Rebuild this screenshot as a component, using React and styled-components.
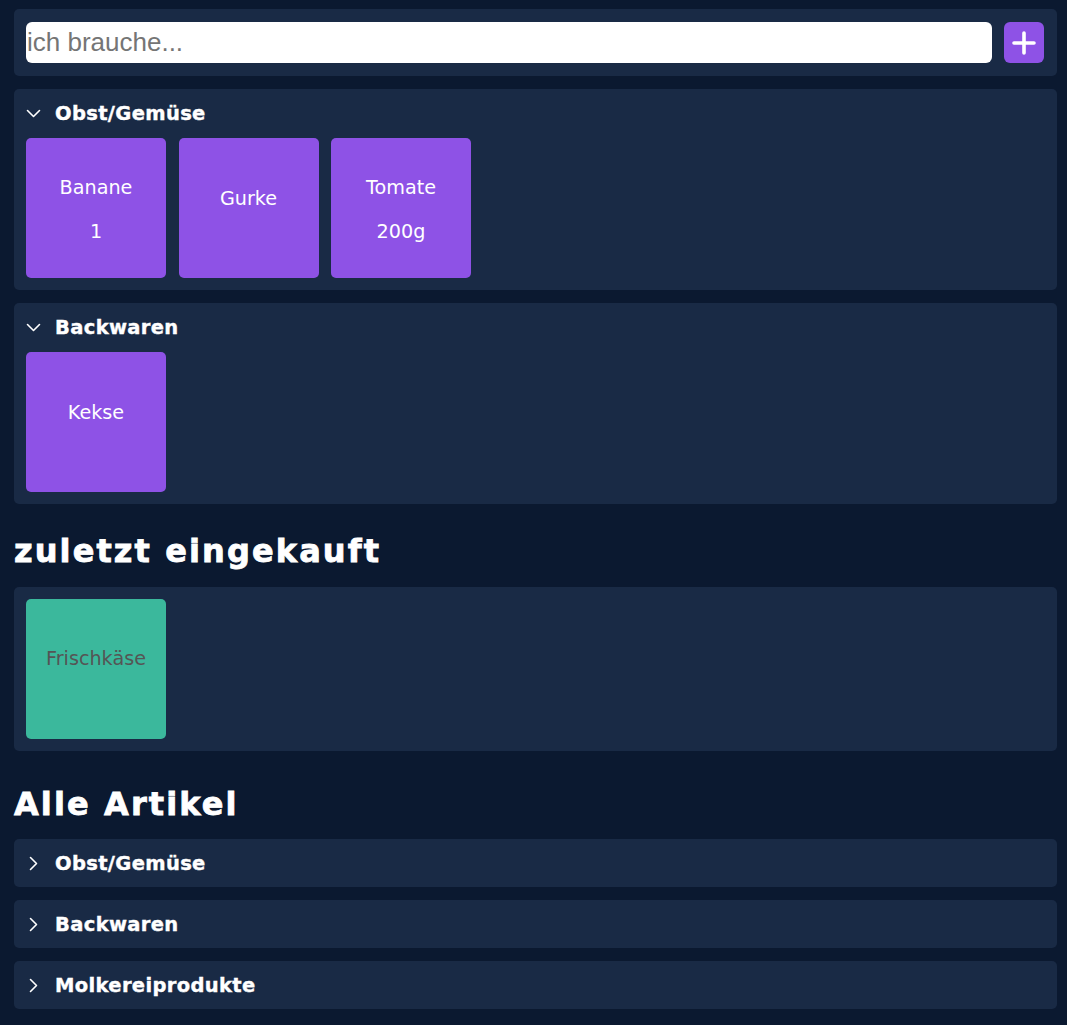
import styled, { createGlobalStyle } from 'styled-components';

const GlobalStyle = createGlobalStyle`
  html, body {
    margin: 0;
    background-color: #0b1930;
  }
  body {
    font-family: "DejaVu Sans", Verdana, sans-serif;
    color: #ffffff;
  }
`;

const Page = styled.div`
  display: flex;
  flex-direction: column;
  gap: 13px;
  padding: 9px 10px 14px 14px;
`;

const Panel = styled.section`
  background-color: #192a45;
  border-radius: 5px;
  padding: 12px 13px 12px 12px;
  display: flex;
  flex-direction: column;
  gap: 13px;
`;

const SearchBar = styled.form`
  display: flex;
  gap: 12px;
  margin: 1px 0;
`;

const Input = styled.input`
  flex: 1;
  height: 41px;
  border: none;
  border-radius: 6px;
  padding: 0 1px;
  font-family: "Liberation Sans", Arial, sans-serif;
  font-size: 26px;
  color: #222;
  background: #ffffff;
  outline: none;

  &::placeholder {
    color: #757575;
  }
`;

const AddButton = styled.button`
  width: 40px;
  height: 41px;
  border: none;
  border-radius: 6px;
  background-color: #8e52e6;
  display: flex;
  align-items: center;
  justify-content: center;
  padding: 0;
  cursor: pointer;
`;

const Header = styled.button`
  display: flex;
  align-items: center;
  height: 24px;
  padding: 0;
  background: none;
  border: none;
  color: #ffffff;
  font-family: "DejaVu Sans", Verdana, sans-serif;
  font-weight: bold;
  font-size: 19.5px;
  letter-spacing: 0.35px;
  -webkit-text-stroke: 0.4px #ffffff;
  text-align: left;
  cursor: pointer;
`;

const Chevron = styled.svg`
  width: 15px;
  height: 15px;
  margin-right: 14px;
  flex-shrink: 0;
  transform: rotate(${(p) => (p.$open ? '0deg' : '-90deg')});
`;

const Tiles = styled.div`
  display: flex;
  flex-wrap: wrap;
  gap: 13px 12.5px;
`;

const Tile = styled.div`
  width: 140px;
  height: 140px;
  box-sizing: border-box;
  padding-top: 3px;
  border-radius: 5px;
  background-color: ${(p) => (p.$done ? '#3bb89c' : '#8e52e6')};
  color: ${(p) => (p.$done ? '#555555' : '#ffffff')};
  display: flex;
  flex-direction: column;
  align-items: center;
  justify-content: center;
  gap: 22px;
  font-size: 19.2px;
  line-height: 22px;
`;

const Line = styled.span`
  display: block;
`;

const Title = styled.h1`
  margin: ${(p) => p.$top}px 0 3.5px;
  font-size: 32px;
  font-weight: bold;
  letter-spacing: 2.1px;
  -webkit-text-stroke: 0.8px #ffffff;
  line-height: normal;
`;

function Category({ name, open, items }) {
  return (
    <Panel>
      <Header type="button">
        <Chevron $open={open} viewBox="0 0 15 15" fill="none" stroke="#fff" strokeWidth="1.6" strokeLinecap="round" strokeLinejoin="round">
          <path d="M1.5 4.5 L7.5 10.5 L13.5 4.5" />
        </Chevron>
        {name}
      </Header>
      {open && (
        <Tiles>
          {items.map((item) => (
            <Tile key={item.name}>
              <Line>{item.name}</Line>
              <Line>{item.amount}</Line>
            </Tile>
          ))}
        </Tiles>
      )}
    </Panel>
  );
}

export default function App() {
  return (
    <>
      <GlobalStyle />
      <Page>
        <Panel>
          <SearchBar onSubmit={(e) => e.preventDefault()}>
            <Input placeholder="ich brauche..." />
            <AddButton type="submit" aria-label="hinzufügen">
              <svg width="24" height="24" viewBox="0 0 24 24" fill="none" stroke="#fff" strokeWidth="3.6" strokeLinecap="round">
                <path d="M2 12h20M12 2v20" />
              </svg>
            </AddButton>
          </SearchBar>
        </Panel>

        {shoppingList.map((cat) => (
          <Category key={cat.name} name={cat.name} items={cat.items} open />
        ))}

        <Title $top={15}>zuletzt eingekauft</Title>
        <Panel>
          <Tiles>
            {recentlyBought.map((item) => (
              <Tile key={item} $done>
                <Line>{item}</Line>
                <Line />
              </Tile>
            ))}
          </Tiles>
        </Panel>

        <Title $top={21}>Alle Artikel</Title>
        {allCategories.map((name) => (
          <Category key={name} name={name} items={[]} />
        ))}
      </Page>
    </>
  );
}

const shoppingList = [
  {
    name: 'Obst/Gemüse',
    items: [
      { name: 'Banane', amount: '1' },
      { name: 'Gurke', amount: '' },
      { name: 'Tomate', amount: '200g' },
    ],
  },
  {
    name: 'Backwaren',
    items: [{ name: 'Kekse', amount: '' }],
  },
];

const recentlyBought = ['Frischkäse'];

const allCategories = ['Obst/Gemüse', 'Backwaren', 'Molkereiprodukte'];
